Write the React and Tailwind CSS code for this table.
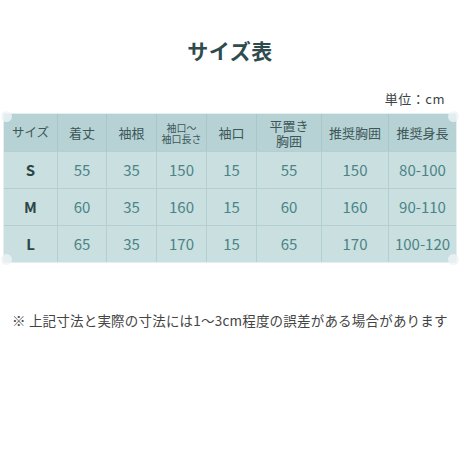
import React from "react";

const cols = ["w-[54px]", "w-[49px]", "w-[50px]", "w-[50px]", "w-[50px]", "w-[65px]", "w-[67px]", "w-[67px]"];

const header = [
  { t: "サイズ", c: "text-[12.5px]" },
  { t: "着丈", c: "text-[13px]" },
  { t: "袖根", c: "text-[13px]" },
  { t: "袖口〜\n袖口長さ", c: "text-[10px] leading-[11px]" },
  { t: "袖口", c: "text-[13px]" },
  { t: "平置き\n胸囲", c: "text-[13px] leading-[15px]" },
  { t: "推奨胸囲", c: "text-[13px]" },
  { t: "推奨身長", c: "text-[13px]" },
];

const rows = [
  ["S", "55", "35", "150", "15", "55", "150", "80-100"],
  ["M", "60", "35", "160", "15", "60", "160", "90-110"],
  ["L", "65", "35", "170", "15", "65", "170", "100-120"],
];

const font = { fontFamily: '"Noto Sans CJK JP", "Noto Sans", sans-serif' };

function Corner({ pos }) {
  return (
    <div className={`absolute w-[11px] h-[11px] rounded-full bg-[#eef4f5] opacity-80 ${pos}`} />
  );
}

export default function App() {
  return (
    <div className="w-[460px] h-[460px] bg-white flex flex-col items-center" style={font}>
      <div className="h-[35px]" />
      <div className="text-[21px] font-bold text-[#2e4b4d] leading-[30px] tracking-[0.5px]">サイズ表</div>
      <div className="w-full flex justify-end pr-[15px] mt-[20px] h-[28px] items-center">
        <span className="text-[13px] text-[#3a4446] tracking-[0.5px]">単位：cm</span>
      </div>
      <div className="relative mt-[0px] ml-[0px] p-[1px] bg-[#e6eff0]">
        <div className="flex flex-col">
          <div className="flex h-[37px] bg-[#b6d2d4]">
            {header.map((h, i) => (
              <div
                key={i}
                className={`${cols[i]} flex items-center justify-center text-center border-r border-[#a9c6c8] last:border-r-0 text-[#3d5658] ${h.c} whitespace-pre-line`}
              >
                {h.t}
              </div>
            ))}
          </div>
          {rows.map((r, ri) => (
            <div key={ri} className="flex h-[37px] bg-[#c9dfe0] border-t border-[#b4cfd1]">
              {r.map((c, i) => (
                <div
                  key={i}
                  className={`${cols[i]} flex items-center justify-center border-r border-[#b4cfd1] last:border-r-0 text-[15px] ${i === 0 ? "text-[#2c4547] font-semibold" : "text-[#4b8486]"}`}
                >
                  {c}
                </div>
              ))}
            </div>
          ))}
        </div>
        <Corner pos="top-[-2px] left-[-2px]" />
        <Corner pos="top-[-2px] right-[-2px]" />
        <Corner pos="bottom-[-2px] left-[-2px]" />
        <Corner pos="bottom-[-2px] right-[-2px]" />
      </div>
      <div className="mt-[47px] w-full pl-[12px] text-[13.5px] text-[#444444] tracking-[0.2px] whitespace-nowrap">
        ※ 上記寸法と実際の寸法には1〜3cm程度の誤差がある場合があります
      </div>
    </div>
  );
}
